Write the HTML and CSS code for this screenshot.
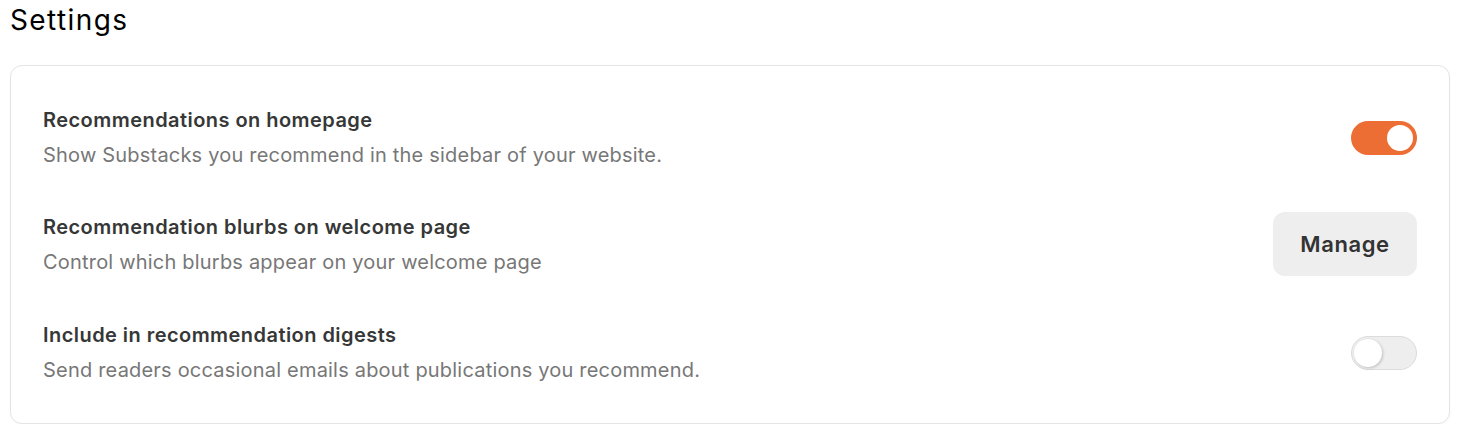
FILE: index.html
```html
<!DOCTYPE html>
<html lang="en">
<head>
<meta charset="utf-8">
<title>Settings</title>
<link rel="stylesheet" href="styles.css">
</head>
<body>
<main class="page">
  <h1 class="page-title">Settings</h1>
  <section class="card">
    <div class="row">
      <div class="row-text">
        <div class="row-title">Recommendations on homepage</div>
        <div class="row-desc">Show Substacks you recommend in the sidebar of your website.</div>
      </div>
      <button class="toggle toggle-on" aria-pressed="true"><span class="knob"></span></button>
    </div>
    <div class="row">
      <div class="row-text">
        <div class="row-title">Recommendation blurbs on welcome page</div>
        <div class="row-desc">Control which blurbs appear on your welcome page</div>
      </div>
      <button class="btn-manage">Manage</button>
    </div>
    <div class="row row-last">
      <div class="row-text">
        <div class="row-title">Include in recommendation digests</div>
        <div class="row-desc">Send readers occasional emails about publications you recommend.</div>
      </div>
      <button class="toggle toggle-off" aria-pressed="false"><span class="knob"></span></button>
    </div>
  </section>
</main>
</body>
</html>
```
FILE: styles.css
```css
* { box-sizing: border-box; }
html, body { margin: 0; padding: 0; background: #ffffff; }
body {
  font-family: Inter, "Noto Sans", "Liberation Sans", sans-serif;
  color: #333333;
}
.page {
  padding: 2px 12px 0 10px;
}
.page-title {
  margin: 0;
  font-size: 28px;
  font-weight: 400;
  line-height: 36px;
  color: #000000;
  letter-spacing: 1.4px;
}
.card {
  margin-top: 27px;
  border: 1px solid #e4e4e4;
  border-radius: 12px;
  padding: 40px 32px 39px 32px;
  display: flex;
  flex-direction: column;
  gap: 43px;
  box-shadow: 0 1px 2px rgba(0,0,0,0.04);
}
.row {
  display: flex;
  align-items: center;
  justify-content: space-between;
}
.row-last {
  margin-top: 2px;
}
.row-text {
  display: flex;
  flex-direction: column;
  gap: 7px;
}
.row-title {
  font-size: 20px;
  font-weight: 600;
  line-height: 28px;
  letter-spacing: 0.45px;
  color: #363737;
}
.row-desc {
  font-size: 20px;
  font-weight: 400;
  line-height: 28px;
  letter-spacing: 0.2px;
  color: #777777;
}
.toggle {
  width: 66px;
  height: 34px;
  border-radius: 17px;
  padding: 0;
  position: relative;
  cursor: pointer;
  flex: none;
}
.toggle-on {
  background: #ec6e35;
  border: none;
}
.toggle-on .knob {
  position: absolute;
  top: 4px;
  right: 4px;
  width: 26px;
  height: 26px;
  border-radius: 50%;
  background: #ffffff;
}
.toggle-off {
  background: #eeeeee;
  border: 1px solid #dcdcdc;
}
.toggle-off .knob {
  position: absolute;
  top: 2px;
  left: 2px;
  width: 28px;
  height: 28px;
  border-radius: 50%;
  background: #ffffff;
  box-shadow: 1px 1px 3px rgba(0,0,0,0.2);
}
.btn-manage {
  width: 144px;
  height: 64px;
  border: none;
  border-radius: 12px;
  background: #eeeeee;
  font-family: inherit;
  font-size: 22px;
  font-weight: 600;
  letter-spacing: 0.6px;
  color: #333333;
  cursor: pointer;
  flex: none;
}
```
